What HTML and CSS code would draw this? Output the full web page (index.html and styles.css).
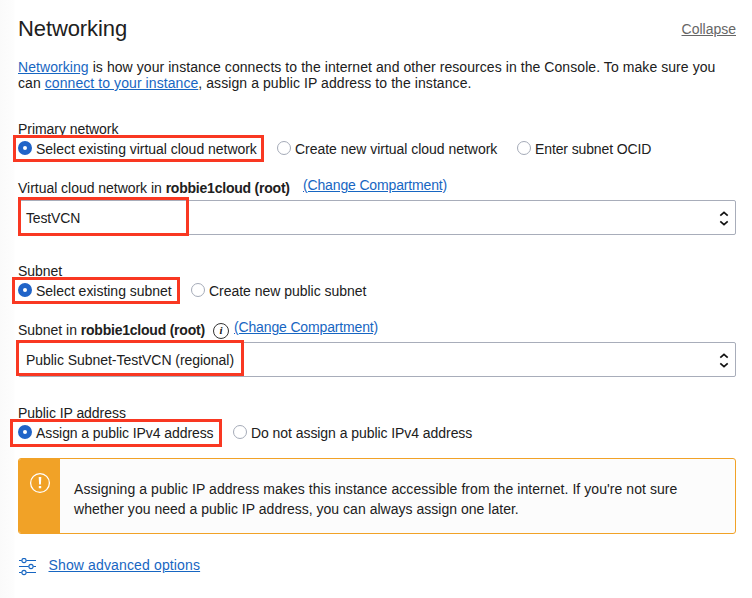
FILE: index.html
```html
<!DOCTYPE html>
<html lang="en">
<head>
<meta charset="utf-8">
<title>Networking</title>
<link rel="stylesheet" href="styles.css">
</head>
<body>
<main class="panel">
  <header class="head">
    <h1 class="title">Networking</h1>
    <a class="collapse">Collapse</a>
  </header>
  <p class="intro"><span class="intro-a"><a class="link">Networking</a> is how your instance connects to the internet and other resources in the Console. To make sure you</span><br><span class="intro-b">can <a class="link">connect to your instance</a>, assign a public IP address to the instance.</span></p>

  <section class="group">
    <div class="legend">Primary network</div>
    <div class="radios">
      <label class="radio r-existing-vcn"><i class="dot on"></i><span>Select existing virtual cloud network</span><b class="mark mark-vcn-radio"></b></label>
      <label class="radio r-new-vcn"><i class="dot"></i><span>Create new virtual cloud network</span></label>
      <label class="radio r-ocid"><i class="dot"></i><span>Enter subnet OCID</span></label>
    </div>
    <div class="caption"><span class="caption-text">Virtual cloud network in <strong>robbie1cloud (root)</strong></span><a class="link change">(Change Compartment)</a></div>
    <div class="select"><span class="value v-vcn">TestVCN</span>
      <svg class="arrows" width="10" height="16" viewBox="0 0 10 16"><path d="M1.3 5.6 5 2.3 8.7 5.6M1.3 11.4 5 14.7 8.7 11.4"/></svg>
      <b class="mark mark-vcn"></b></div>
  </section>

  <section class="group">
    <div class="legend">Subnet</div>
    <div class="radios">
      <label class="radio r-existing-sub"><i class="dot on"></i><span>Select existing subnet</span><b class="mark mark-sub-radio"></b></label>
      <label class="radio r-new-sub"><i class="dot"></i><span>Create new public subnet</span></label>
    </div>
    <div class="caption"><span class="caption-text c-sub">Subnet in <strong>robbie1cloud (root)</strong></span><span class="info">i</span><a class="link change">(Change Compartment)</a></div>
    <div class="select"><span class="value v-sub">Public Subnet-TestVCN (regional)</span>
      <svg class="arrows" width="10" height="16" viewBox="0 0 10 16"><path d="M1.3 5.6 5 2.3 8.7 5.6M1.3 11.4 5 14.7 8.7 11.4"/></svg>
      <b class="mark mark-sub"></b></div>
  </section>

  <section class="group last">
    <div class="legend">Public IP address</div>
    <div class="radios">
      <label class="radio r-assign"><i class="dot on"></i><span>Assign a public IPv4 address</span><b class="mark mark-ip"></b></label>
      <label class="radio r-none"><i class="dot"></i><span>Do not assign a public IPv4 address</span></label>
    </div>
  </section>

  <div class="alert">
    <div class="alert-side"><svg width="22" height="22" viewBox="0 0 22 22"><circle cx="11" cy="11" r="9.4"/><path d="M9.7 5h2.6l-.4 7.4h-1.8zM9.8 14h2.4v2.3H9.8z"/></svg></div>
    <p class="alert-text"><span class="alert-a">Assigning a public IP address makes this instance accessible from the internet. If you're not sure</span><br><span class="alert-b">whether you need a public IP address, you can always assign one later.</span></p>
  </div>

  <div class="advanced">
    <svg class="sliders" width="18" height="18" viewBox="0 0 18 18"><path d="M1 2.5h2.7M8.3 2.5H18M1 8.5h9.7M15.3 8.5H18M1 14.5h2.7M8.3 14.5H18"/><circle cx="6" cy="2.5" r="2.1"/><circle cx="13" cy="8.5" r="2.1"/><circle cx="6" cy="14.5" r="2.1"/></svg>
    <a class="link adv-link">Show advanced options</a>
  </div>
</main>
</body>
</html>
```
FILE: styles.css
```css
* { box-sizing: border-box; }
body {
  margin: 0;
  height: 598px;
  overflow: hidden;
  background: linear-gradient(90deg, #fafafa 0, #fdfdfd 14px, #fff 15px);
  color: #202020;
  font: 14px/16px "Liberation Sans", Arial, sans-serif;
  white-space: nowrap;
}
.panel { padding: 17px 16px 0 18px; }
.head { display: flex; justify-content: space-between; height: 42px; }
.title { margin: 0; font-size: 22px; line-height: 24px; font-weight: 400; letter-spacing: -.1px; }
.collapse { margin-top: 4px; color: #666; text-decoration: underline; }
.link { color: #1766c2; text-decoration: underline; }
.intro { margin: 0 0 30px; }
.intro-a { letter-spacing: .068px; }
.intro-b { letter-spacing: .075px; }
.group { height: 142px; }
.last { height: 45px; }
.legend { height: 16px; letter-spacing: -.05px; }
.radios { display: flex; height: 24px; align-items: center; }
.radio { position: relative; display: flex; align-items: center; gap: 4px; height: 20px; letter-spacing: -.025px; }
.dot { width: 14px; height: 14px; margin-top: -3px; border: 1px solid #a5abb8; border-radius: 50%; background: #fff; }
.dot.on { border: 5px solid #2064c8; }
.caption { display: flex; height: 39px; padding-top: 19px; }
.caption-text { width: 285px; letter-spacing: -.03px; }
.caption-text strong { letter-spacing: -.22px; }
.c-sub { width: 195px; }
.change { margin-top: -3px; letter-spacing: -.15px; }
.info {
  width: 16px; height: 16px; margin: 1px 5px 0 0; border: 1px solid #333; border-radius: 50%;
  font: italic bold 11px/13px "Liberation Serif", serif; text-align: center;
}
.select {
  position: relative; display: flex; align-items: center; justify-content: space-between;
  height: 35px; padding: 0 6px 0 7px; border: 1px solid #a8adba; border-radius: 2px; background: #fff;
}
.v-vcn { letter-spacing: -.15px; }
.v-sub { letter-spacing: -.04px; }
.arrows { fill: none; stroke: #111; stroke-width: 1.7; }
.mark { position: absolute; border: 3px solid #f93822; }
.mark-vcn-radio { left: -5px; top: -4px; width: 251px; height: 27px; }
.mark-vcn { left: -1px; top: -4px; width: 171px; height: 39px; }
.mark-sub-radio { left: -6px; top: -4px; width: 168px; height: 27px; }
.mark-sub { left: -3px; top: -3px; width: 228px; height: 36px; }
.mark-ip { left: -8px; top: -4px; width: 212px; height: 28px; }
.r-existing-vcn { width: 259px; }
.r-new-vcn { width: 240px; }
.r-ocid { letter-spacing: -.12px; }
.r-existing-sub { width: 173px; }
.r-assign { width: 215px; letter-spacing: -.08px; }
.r-none { letter-spacing: -.06px; }
.alert {
  display: flex; height: 76px; margin-top: 8px; border: 1px solid #f1a227; border-radius: 3px;
  background: #fcfcfc; overflow: hidden;
}
.alert-side { width: 41px; padding: 13px 0 0 10px; background: #f1a227; }
.alert-side circle { fill: none; stroke: #fff; stroke-width: 1.3; }
.alert-side path { fill: #fff; }
.alert-text { margin: 20px 0 0 14px; line-height: 20px; }
.alert-a { letter-spacing: .066px; }
.alert-b { letter-spacing: .02px; }
.advanced { display: flex; gap: 12px; margin-top: 23px; }
.adv-link { margin-left: .5px; letter-spacing: .14px; }
.sliders { margin-top: 1px; fill: none; stroke: #1766c2; stroke-width: 1.1; }
```
